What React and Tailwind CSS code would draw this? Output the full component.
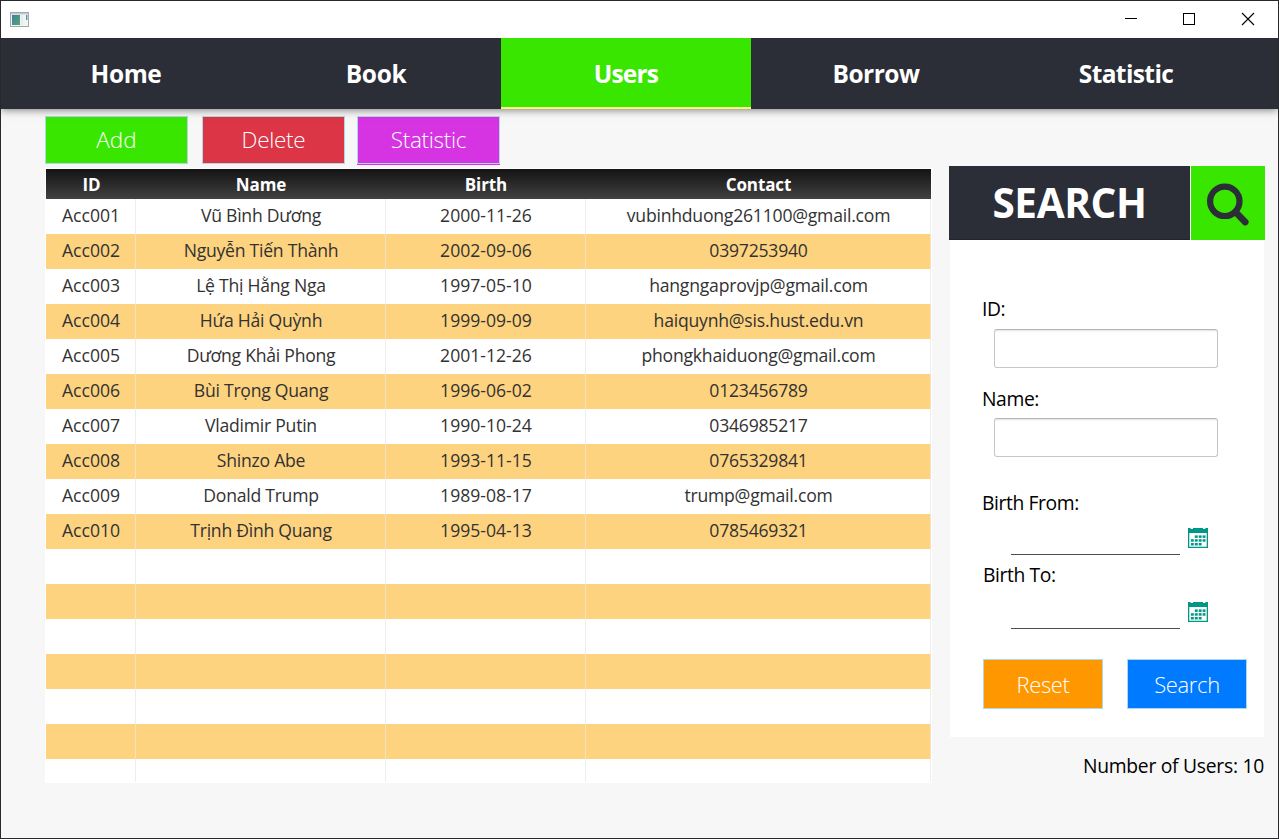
import React from "react";

const tabs = [
  { label: "Home", spacing: "tracking-[-0.4px]" },
  { label: "Book", spacing: "tracking-[-0.4px]" },
  { label: "Users", spacing: "tracking-[-0.8px]", active: true },
  { label: "Borrow", spacing: "tracking-[-0.5px]" },
  { label: "Statistic", spacing: "tracking-[-0.6px]" },
];

const users = [
  ["Acc001", "Vũ Bình Dương", "2000-11-26", "vubinhduong261100@gmail.com"],
  ["Acc002", "Nguyễn Tiến Thành", "2002-09-06", "0397253940"],
  ["Acc003", "Lệ Thị Hằng Nga", "1997-05-10", "hangngaprovjp@gmail.com"],
  ["Acc004", "Hứa Hải Quỳnh", "1999-09-09", "haiquynh@sis.hust.edu.vn"],
  ["Acc005", "Dương Khải Phong", "2001-12-26", "phongkhaiduong@gmail.com"],
  ["Acc006", "Bùi Trọng Quang", "1996-06-02", "0123456789"],
  ["Acc007", "Vladimir Putin", "1990-10-24", "0346985217"],
  ["Acc008", "Shinzo Abe", "1993-11-15", "0765329841"],
  ["Acc009", "Donald Trump", "1989-08-17", "trump@gmail.com"],
  ["Acc010", "Trịnh Đình Quang", "1995-04-13", "0785469321"],
];

const rows = [...users, ...Array.from({ length: 7 }, () => ["", "", "", ""])];

const columns = "grid grid-cols-[90px_250px_200px_345px]";

const cellSpacing = ["", "tracking-[-0.25px]", "", "tracking-[-0.22px]"];

function AppIcon() {
  return (
    <svg className="h-[15px] w-[19px]" viewBox="0 0 19 15">
      <defs>
        <linearGradient id="screen" x1="0" y1="0" x2="1" y2="1">
          <stop offset="0" stopColor="#3f7fa0" />
          <stop offset="1" stopColor="#55a878" />
        </linearGradient>
      </defs>
      <rect x="0.5" y="0.5" width="18" height="14" fill="#f2f3f4" stroke="#a3a8ad" />
      <rect x="1" y="1" width="17" height="1.5" fill="#c5c9cc" />
      <rect x="2" y="3" width="8" height="10" fill="url(#screen)" />
      <rect x="16" y="3" width="1.4" height="5" fill="#4aa0a0" />
      <path d="M12 3v10" stroke="#e0e2e4" />
    </svg>
  );
}

function CalendarIcon() {
  return (
    <svg className="h-5 w-5" viewBox="0 0 20 20">
      <path
        fill="#009688"
        fillRule="evenodd"
        d="M0 0H2.6V1H5V0H15V1H17.4V0H20V20H0ZM1.3 5V18.8H18.7V5Z"
      />
      {[
        [6.8, 7.4], [10.7, 7.4], [14.6, 7.4],
        [2.9, 11.2], [6.8, 11.2], [10.7, 11.2], [14.6, 11.2],
        [2.9, 15], [6.8, 15], [10.7, 15],
      ].map(([x, y]) => (
        <rect key={`${x}-${y}`} x={x} y={y} width="2.9" height="2.5" fill="#009688" />
      ))}
    </svg>
  );
}

function ActionButton({ className, children }) {
  return (
    <button
      className={`flex items-center justify-center border border-[#add8e6] font-light text-white ${className}`}
    >
      {children}
    </button>
  );
}

function Label({ className, children }) {
  return (
    <label className={`block h-7 text-[19.3px] leading-7 tracking-[-0.4px] whitespace-nowrap text-black ${className}`}>
      {children}
    </label>
  );
}

function TextInput({ className }) {
  return (
    <input
      className={`block h-[39px] w-[224px] rounded-[3px] border border-[#c6c6c6] border-t-[#b4b4b4] bg-white shadow-[inset_0_2px_2px_-1px_#e2e2e2] ${className}`}
    />
  );
}

function DateInput({ className }) {
  return (
    <div className={`ml-[61px] flex h-[27px] items-start gap-2 ${className}`}>
      <div className="h-[27px] w-[169px] border-b border-[#4d4d4d]" />
      <CalendarIcon />
    </div>
  );
}

export default function App() {
  return (
    <div className="flex h-[839px] w-[1279px] flex-col overflow-hidden border border-[#29282c] bg-[#f7f7f7] font-['Open_Sans','Noto_Sans',sans-serif]">
      <header className="z-20 flex h-[37px] shrink-0 items-center justify-between bg-white">
        <div className="ml-[9px] pb-px">
          <AppIcon />
        </div>
        <svg className="h-[37px] w-[174px]" viewBox="0 0 174 37" fill="none" stroke="#000">
          <path d="M21 17.5h12" />
          <rect x="79.5" y="12.5" width="11" height="11" />
          <path d="M138 12l12 12M150 12l-12 12" strokeWidth="1.1" />
        </svg>
      </header>

      <nav className="z-10 flex h-[71px] shrink-0 bg-[#2b2d37] shadow-[0_1px_8px_rgba(0,0,0,0.5)]">
        {tabs.map((t) => (
          <div
            key={t.label}
            className={`flex w-[250px] items-center justify-center text-[24.5px] font-bold text-white ${t.spacing} ${
              t.active ? "border-b-2 border-[#fff37a] bg-[#39e600] pt-[3px]" : "pt-px"
            }`}
          >
            {t.label}
          </div>
        ))}
      </nav>

      <main className="flex min-h-0 flex-1 gap-[17px] pl-11">
        <section className="w-[887px] pt-[7px]">
          <div className="flex h-12 text-[22.5px]">
            <ActionButton className="w-[143px] bg-[#39e600]">Add</ActionButton>
            <ActionButton className="ml-[14px] w-[143px] bg-[#dc3545] tracking-[-0.3px]">Delete</ActionButton>
            <ActionButton className="ml-3 w-[143px] bg-[#d633e3] tracking-[-0.3px] shadow-[0_1px_0_#d633e3]">
              Statistic
            </ActionButton>
          </div>

          <div className="mt-1 h-[615px] overflow-hidden border border-white bg-white text-[17.6px]">
            <div className={`${columns} h-[30px] bg-linear-to-b from-[#141414] to-[#424242] pt-px text-center text-[17px] leading-[30px] font-bold tracking-[-0.1px] text-white`}>
              <div className="pl-px">ID</div>
              <div>Name</div>
              <div>Birth</div>
              <div>Contact</div>
            </div>
            <div className="h-[583px] overflow-hidden">
              {rows.map((row, i) => (
                <div
                  key={i}
                  className={`${columns} h-[35px] text-center leading-[33px] text-[#323232] ${
                    i % 2 ? "bg-[#fed37f]" : "bg-white"
                  }`}
                >
                  {row.map((cell, j) => (
                    <div
                      key={j}
                      className={`border-r pl-px whitespace-nowrap ${
                        i % 2 ? "border-[#f3e3c3]" : "border-[#ededed]"
                      } ${cellSpacing[j]}`}
                    >
                      {cell}
                    </div>
                  ))}
                </div>
              ))}
            </div>
          </div>
        </section>

        <aside className="w-[316px] pt-[57px]">
          <div className="flex h-[74px] gap-px bg-white">
            <div className="flex w-[241px] items-center justify-center border-b border-[#22232f] bg-[#2b2d37] pt-px text-[40.5px] font-bold tracking-[-0.4px] text-white">
              SEARCH
            </div>
            <div className="w-[74px] bg-[#39e600]">
              <svg className="h-[74px] w-[74px]" viewBox="0 0 74 74" fill="none" stroke="#2b2d37">
                <circle cx="33.8" cy="35.3" r="14.7" strokeWidth="6.2" />
                <path d="M44.5 46L54.3 56.1" strokeWidth="6.6" strokeLinecap="round" />
              </svg>
            </div>
          </div>

          <div className="mx-px flex h-[497px] flex-col bg-white">
            <Label className="mt-[55px] ml-8">ID:</Label>
            <TextInput className="mt-[6px] ml-11" />
            <Label className="mt-[17px] ml-8">Name:</Label>
            <TextInput className="mt-[5px] ml-11" />
            <Label className="mt-8 ml-8">Birth From:</Label>
            <DateInput className="mt-[11px]" />
            <Label className="mt-[6px] ml-[33px]">Birth To:</Label>
            <DateInput className="mt-[13px]" />
            <div className="mt-[30px] ml-[33px] flex gap-6 text-[22px] tracking-[-0.35px]">
              <ActionButton className="h-[50px] w-[120px] bg-[#ff9800]">Reset</ActionButton>
              <ActionButton className="h-[50px] w-[120px] bg-[#007bff]">Search</ActionButton>
            </div>
          </div>

          <p className="mt-[15px] mr-px text-right text-[19.3px] leading-7 tracking-[-0.26px] whitespace-nowrap text-black">
            Number of Users: 10
          </p>
        </aside>
      </main>
    </div>
  );
}
